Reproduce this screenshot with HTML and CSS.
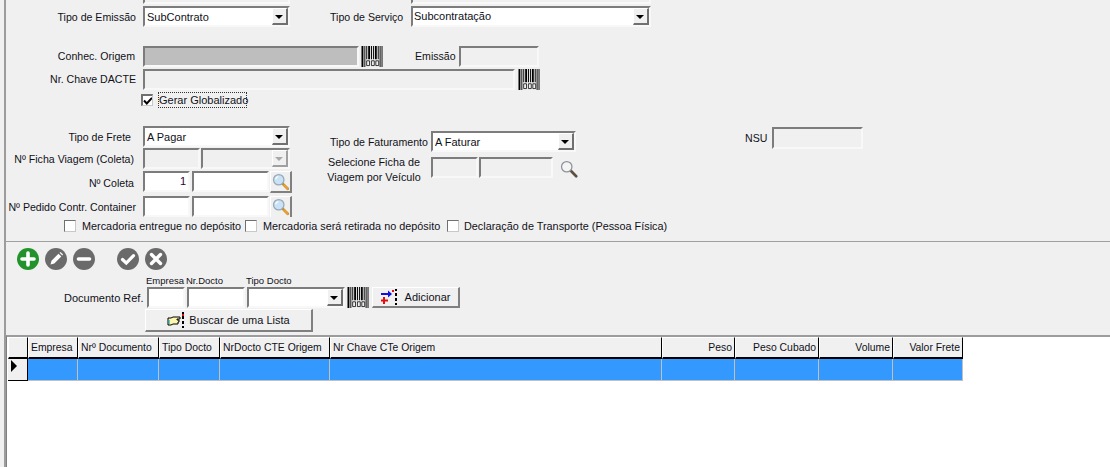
FILE: index.html
```html
<!DOCTYPE html>
<html lang="en">
<head>
    <meta charset="UTF-8">
    <title>Documento Ref</title>
    <link rel="stylesheet" href="styles.css">
</head>
<body>
    <svg class="defs" width="0" height="0">
        <symbol id="barcode" viewBox="0 0 22 22">
            <path fill="#000" d="M0 0h2v22H0zM3 0h1v22H3zM5 0h1v14H5zM7 0h2v14H7zM10 0h1v14h-1zM12 0h1v14h-1zM14 0h2v14h-2zM17 0h1v14h-1zM19 0h1v22h-1zM21 0h1v22h-1z"/>
            <path fill="none" stroke="#000" stroke-width=".8" d="M5.4 15.5h3v5h-3zM10.4 15.5h3v5h-3zM15 15.5h3v5h-3z"/>
        </symbol>
        <symbol id="lens" viewBox="0 0 20 20">
            <path d="M11.5 11.5l6 6" stroke="#b98a2e" stroke-width="3" stroke-linecap="round"/>
            <path d="M13.5 13.5l4 4" stroke="#f0a030" stroke-width="2" stroke-linecap="round"/>
            <circle cx="7.5" cy="7.5" r="5.8" fill="#c8e2f7" stroke="#9aa8b2" stroke-width="1.4"/>
            <path d="M4 7a3.6 3.6 0 0 1 3-3" fill="none" stroke="#fff" stroke-width="1.2"/>
        </symbol>
        <symbol id="lens-off" viewBox="0 0 20 20">
            <path d="M12 12l6 6" stroke="#5c5040" stroke-width="3" stroke-linecap="round"/>
            <circle cx="7.5" cy="7.5" r="5.8" fill="#f4f4f4" stroke="#8b9298" stroke-width="1.4"/>
        </symbol>
        <symbol id="tick" viewBox="0 0 12 12">
            <path d="M2 5.5l2.8 3L10 2.8" fill="none" stroke="#000" stroke-width="2"/>
        </symbol>
    </svg>

    <div class="window">
        <div class="stub-row">
            <div class="stub stub-a"></div>
            <div class="stub stub-b"></div>
        </div>

        <div class="row row-emissao">
            <label class="label label-w">Tipo de Emissão</label>
            <div class="select w-147"><span class="select-text">SubContrato</span><span class="arrow"></span></div>
            <label class="label label-servico">Tipo de Serviço</label>
            <div class="select w-240 select-up"><span class="select-text">Subcontratação</span><span class="arrow"></span></div>
        </div>

        <div class="row row-conhec">
            <label class="label label-w">Conhec. Origem</label>
            <div class="input input-grey w-216"></div>
            <svg class="barcode"><use href="#barcode"/></svg>
            <label class="label label-emissao">Emissão</label>
            <div class="input w-80"></div>
        </div>
        <div class="row row-chave">
            <label class="label label-w">Nr. Chave DACTE</label>
            <div class="input w-372"></div>
            <svg class="barcode"><use href="#barcode"/></svg>
        </div>
        <div class="row row-global">
            <span class="check check-on"><svg width="12" height="12"><use href="#tick"/></svg></span>
            <span class="focus-label">Gerar Globalizado</span>
        </div>

        <div class="form-cols">
            <div class="col-left">
                <div class="row row-frete">
                    <label class="label label-w">Tipo de Frete</label>
                    <div class="select w-147"><span class="select-text">A Pagar</span><span class="arrow"></span></div>
                </div>
                <div class="row row-ficha">
                    <label class="label label-w">Nº Ficha Viagem (Coleta)</label>
                    <div class="input w-57"></div>
                    <div class="select select-off w-89"><span class="arrow arrow-off"></span></div>
                </div>
                <div class="row row-coleta">
                    <label class="label label-w">Nº Coleta</label>
                    <div class="input input-white w-47 num">1</div>
                    <div class="input input-white w-77"></div>
                    <button class="lens-btn"><svg width="18" height="18"><use href="#lens"/></svg></button>
                </div>
                <div class="row row-pedido">
                    <label class="label label-w">Nº Pedido Contr. Container</label>
                    <div class="input input-white w-47"></div>
                    <div class="input input-white w-77"></div>
                    <button class="lens-btn lens-btn-cut"><svg width="18" height="18"><use href="#lens"/></svg></button>
                </div>
            </div>
            <div class="col-mid">
                <div class="row">
                    <label class="label label-fat">Tipo de Faturamento</label>
                    <div class="select w-145"><span class="select-text">A Faturar</span><span class="arrow"></span></div>
                </div>
                <div class="row row-selecione">
                    <label class="label label-sel">Selecione Ficha de<br>Viagem por Veículo</label>
                    <div class="input w-47"></div>
                    <div class="input w-74"></div>
                    <svg class="lens-plain" width="18" height="18"><use href="#lens-off"/></svg>
                </div>
            </div>
            <div class="col-nsu">
                <label class="label label-nsu">NSU</label>
                <div class="input w-91 tall"></div>
            </div>
        </div>

        <div class="row row-checks">
            <span class="check"></span><span class="check-label cl-1">Mercadoria entregue no depósito</span>
            <span class="check"></span><span class="check-label cl-2">Mercadoria será retirada no depósito</span>
            <span class="check"></span><span class="check-label cl-3">Declaração de Transporte (Pessoa Física)</span>
        </div>

        <div class="panel">
            <div class="toolbar">
                <span class="round round-green"><svg width="22" height="22" viewBox="0 0 22 22"><path d="M11 5v12M5 11h12" stroke="#fff" stroke-width="3.6" stroke-linecap="round"/></svg></span>
                <span class="round"><svg width="22" height="22" viewBox="0 0 22 22"><path d="M5.5 16.5l1-3.8 7-7 2.8 2.8-7 7zM14.5 4.8l1-.8 2.6 2.6-.8 1z" fill="#fff"/></svg></span>
                <span class="round"><svg width="22" height="22" viewBox="0 0 22 22"><path d="M5.5 11h11" stroke="#fff" stroke-width="3.6" stroke-linecap="round"/></svg></span>
                <span class="round round-gap"><svg width="22" height="22" viewBox="0 0 22 22"><path d="M5.5 11.5l3.8 3.6 7.2-7.4" fill="none" stroke="#fff" stroke-width="3.2" stroke-linecap="round"/></svg></span>
                <span class="round"><svg width="22" height="22" viewBox="0 0 22 22"><path d="M6.5 6.5l9 9M15.5 6.5l-9 9" stroke="#fff" stroke-width="3.4" stroke-linecap="round"/></svg></span>
            </div>

            <div class="doc-row">
                <label class="label label-doc">Documento Ref.</label>
                <div class="doc-field">
                    <span class="mini">Empresa</span>
                    <div class="input input-white w-38"></div>
                </div>
                <div class="doc-field">
                    <span class="mini">Nr.Docto</span>
                    <div class="input input-white w-58"></div>
                </div>
                <div class="doc-field">
                    <span class="mini">Tipo Docto</span>
                    <div class="select w-98 select-doc"><span class="arrow"></span></div>
                </div>
                <svg class="barcode barcode-doc"><use href="#barcode"/></svg>
                <button class="btn btn-add">
                    <svg width="20" height="16" viewBox="0 0 20 16">
                        <path d="M0 5h9" stroke="#1010e0" stroke-width="2"/>
                        <path d="M7 1.5l4 3.5-4 3.5z" fill="#1010e0"/>
                        <path d="M3 8v7M0 11.5h7" stroke="#e01010" stroke-width="2"/>
                        <path d="M14 0h2v2h-2zM14 4h2v3h-2zM14 9h2v3h-2zM14 14h2v2h-2z" fill="#000"/>
                        <path d="M11 1h2v2h-2z" fill="#e01010"/>
                    </svg>
                    Adicionar
                </button>
            </div>
            <button class="btn btn-lista">
                <svg width="18" height="16" viewBox="0 0 18 16">
                    <path d="M1 6h3l2-1h7v2h-3v1h2v2h-1v2H6l-2 1H1z" fill="#fbf7b0" stroke="#000"/>
                    <path d="M2 8h1v4H2z" fill="#38d8e0"/>
                    <path d="M15 0h2v2h-2zM15 4h2v3h-2zM15 9h2v3h-2zM15 14h2v2h-2z" fill="#000"/>
                    <path d="M15 2h2v2h-2z" fill="#e01010"/>
                </svg>
                Buscar de uma Lista
            </button>
        </div>

        <div class="grid-area">
            <div class="grid">
                <div class="head corner"></div>
                <div class="head">Empresa</div>
                <div class="head">Nrº Documento</div>
                <div class="head">Tipo Docto</div>
                <div class="head">NrDocto CTE Origem</div>
                <div class="head">Nr Chave CTe Origem</div>
                <div class="head right">Peso</div>
                <div class="head right">Peso Cubado</div>
                <div class="head right">Volume</div>
                <div class="head right">Valor Frete</div>

                <div class="marker"><span class="tri"></span></div>
                <div class="cell"></div>
                <div class="cell"></div>
                <div class="cell"></div>
                <div class="cell"></div>
                <div class="cell"></div>
                <div class="cell"></div>
                <div class="cell"></div>
                <div class="cell"></div>
                <div class="cell"></div>
            </div>
        </div>
    </div>
</body>
</html>
```

FILE: styles.css
```css
*{
    box-sizing: border-box;
    margin: 0;
    padding: 0;
}
html,body{
    height: 100%;
    overflow: hidden;
}
body{
    font-family: "Liberation Sans", Arial, sans-serif;
    font-size: 11px;
    color: #101018;
    background-color: #f0f0f0;
}
.defs{
    display: block;
    height: 0;
}
.window{
    height: 467px;
    margin-left: 4px;
    border-left: 2px solid #9c9c9c;
    display: flex;
    flex-direction: column;
    overflow: hidden;
}
.row{
    display: flex;
    align-items: center;
}

/* labels */
.label{
    font-size: 10.6px;
    white-space: nowrap;
}
.label-w{
    width: 131px;
    margin-right: 6px;
    padding-right: 1px;
    text-align: right;
}
.row-conhec .label-w{
    padding-right: 2px;
    margin-top: -1px;
}
.row-chave .label-w{
    margin-top: -2px;
}
.row-frete .label-w{
    padding-right: 6px;
}
.row-ficha .label-w{
    padding-right: 3px;
}
.row-coleta .label-w{
    padding-right: 3px;
    margin-top: 2px;
}

/* fields */
.input{
    height: 21px;
    border: 2px solid #f8f8f8;
    border-top-color: #7c7c7c;
    border-left-color: #7c7c7c;
    background-color: #f0f0f0;
    flex: none;
}
.input-grey{
    background-color: #bebebe;
}
.input-white{
    background-color: #fff;
}
.num{
    text-align: right;
    padding-right: 2px;
    color: #300030;
    line-height: 17px;
}
.select{
    height: 21px;
    border: 2px solid #f8f8f8;
    border-top-color: #7c7c7c;
    border-left-color: #7c7c7c;
    background-color: #fff;
    display: flex;
    align-items: center;
    justify-content: space-between;
    flex: none;
}
.select-text{
    padding-left: 2px;
}
.select-up .select-text{
    padding-left: 1px;
    margin-top: -2px;
}
.select-off{
    background-color: #f0f0f0;
    justify-content: flex-end;
    margin-left: 1px;
}
.arrow{
    width: 16px;
    height: 17px;
    background-color: #f0f0f0;
    border: 2px solid #707070;
    border-top: 1px solid #fff;
    border-left: 1px solid #fff;
    position: relative;
}
.arrow::after{
    content: "";
    position: absolute;
    left: 2px;
    top: 6px;
    border-left: 4px solid transparent;
    border-right: 4px solid transparent;
    border-top: 4px solid #000;
}
.arrow-off{
    border-right-color: #a0a0a0;
    border-bottom-color: #a0a0a0;
}
.arrow-off::after{
    border-top-color: #a8a8a8;
}
.w-38{ width: 38px; }
.w-47{ width: 47px; }
.w-57{ width: 57px; }
.w-58{ width: 58px; }
.w-74{ width: 74px; }
.w-77{ width: 77px; }
.w-80{ width: 80px; }
.w-89{ width: 89px; }
.w-91{ width: 91px; }
.w-98{ width: 98px; }
.w-145{ width: 145px; }
.w-147{ width: 147px; }
.w-216{ width: 216px; }
.w-240{ width: 240px; }
.w-372{ width: 372px; }

/* top area */
.stub-row{
    display: flex;
    height: 4px;
    padding-left: 137px;
    flex: none;
}
.stub{
    height: 4px;
    border: 2px solid #f8f8f8;
    border-top: 0;
    border-left-color: #7c7c7c;
}
.stub-a{
    width: 147px;
}
.stub-b{
    width: 240px;
    margin-left: 121px;
}
.row-emissao{
    margin-top: 2px;
    height: 21px;
}
.label-servico{
    margin-left: 40px;
    width: 81px;
}
.row-conhec{
    margin-top: 19px;
    height: 21px;
}
.label-emissao{
    margin-left: 32px;
    width: 44px;
    margin-top: -1px;
}
.barcode{
    width: 22px;
    height: 21px;
    margin-left: 2px;
    flex: none;
}
.row-chave{
    margin-top: 2px;
    height: 21px;
}
.row-chave .barcode{
    margin-left: 3px;
}
.row-global{
    margin-top: 3px;
    height: 13px;
    padding-left: 135px;
}

/* checks */
.check{
    width: 12px;
    height: 12px;
    flex: none;
    background-color: #fff;
    border: 1px solid #707070;
    border-right-color: #c8c8c8;
    border-bottom-color: #c8c8c8;
    display: block;
    overflow: hidden;
}
.check-on{
    border-top-width: 2px;
    border-left-width: 2px;
    margin-top: 1px;
}
.check-on svg{
    display: block;
    margin: -1px 0 0 -1px;
}
.focus-label{
    width: 89px;
    margin-left: 5px;
    line-height: 14px;
    border: 1px dotted #333;
    white-space: nowrap;
    text-align: center;
}

/* middle form */
.form-cols{
    display: flex;
    margin-top: 20px;
    flex: none;
}
.col-left{
    width: 286px;
    flex: none;
}
.row-frete{
    height: 21px;
}
.row-ficha{
    margin-top: 1px;
    height: 21px;
}
.row-coleta{
    margin-top: 2px;
    height: 21px;
    align-items: flex-start;
}
.row-pedido{
    margin-top: 4px;
    height: 21px;
    align-items: flex-start;
}
.row-coleta .label-w{
    line-height: 20px;
}
.row-pedido .label-w{
    line-height: 22px;
}
.row-coleta .input + .input,
.row-pedido .input + .input{
    margin-left: 2px;
}
.lens-btn{
    width: 22px;
    height: 22px;
    margin-left: 1px;
    background-color: #f0f0f0;
    border: 2px solid #808080;
    border-top: 1px solid #fff;
    border-left: 1px solid #fff;
    display: flex;
    align-items: center;
    justify-content: center;
    flex: none;
}
.lens-btn-cut{
    height: 21px;
    border-bottom: 0;
}
.col-mid{
    width: 435px;
    padding-top: 5px;
    flex: none;
}
.label-fat{
    width: 101px;
    margin-left: 38px;
    text-align: left;
}
.row-selecione{
    margin-top: 5px;
    height: 21px;
    align-items: flex-start;
}
.label-sel{
    width: 112px;
    margin: -2px 1px 0 26px;
    text-align: center;
    line-height: 15px;
    font-size: 10.8px;
}
.row-selecione .input + .input{
    margin-left: 1px;
}
.lens-plain{
    margin: 3px 0 0 7px;
    flex: none;
}
.col-nsu{
    display: flex;
    align-items: center;
    height: 22px;
    padding-left: 22px;
    gap: 7px;
    margin-left: -4px;
    margin-top: 1px;
}
.label-nsu{
    width: 20px;
}
.tall{
    height: 22px;
}
.row-checks{
    margin-top: 3px;
    height: 12px;
    padding-left: 58px;
}
.check-label{
    font-size: 10.85px;
    margin: -1px 0 0 6px;
    white-space: nowrap;
}
.cl-1{
    width: 159px;
    margin-right: 4px;
}
.cl-2{
    width: 178px;
    margin-right: 6px;
}
.cl-3{
    margin-left: 5px;
}

/* lower panel */
.panel{
    margin-top: 9px;
    height: 94px;
    border-top: 1px solid #a0a0a0;
    flex: none;
    padding-left: 11px;
}
.toolbar{
    display: flex;
    gap: 6px;
    margin-top: 6px;
    height: 22px;
}
.round{
    width: 22px;
    height: 22px;
    border-radius: 50%;
    background-color: #6a6a6a;
    display: block;
}
.round svg{
    display: block;
}
.round-green{
    background-color: #22932c;
}
.round-gap{
    margin-left: 16px;
}
.doc-row{
    display: flex;
    align-items: flex-end;
    margin-top: 6px;
    height: 32px;
}
.label-doc{
    width: 130px;
    padding-left: 47px;
    margin-bottom: 4px;
    font-size: 11px;
}
.doc-field{
    display: flex;
    flex-direction: column;
    margin-right: 2px;
    flex: none;
}
.mini{
    font-size: 9.5px;
    line-height: 11px;
    white-space: nowrap;
    margin: -1px 0 1px -1px;
}
.select-doc{
    justify-content: flex-end;
}
.barcode-doc{
    margin-left: 0;
}
.btn{
    font-family: inherit;
    font-size: 11px;
    color: #101018;
    background-color: #f0f0f0;
    border: 2px solid #808080;
    border-top: 1px solid #fff;
    border-left: 1px solid #fff;
    display: flex;
    align-items: center;
    justify-content: center;
    gap: 4px;
}
.btn-add{
    width: 88px;
    height: 21px;
    margin-left: 3px;
}
.btn-lista{
    width: 168px;
    height: 23px;
    margin: 1px 0 0 128px;
}

/* table */
.grid-area{
    flex: 1;
    background-color: #fff;
    border-top: 2px solid #9c9c9c;
    border-left: 1px solid #808080;
    padding-left: 1px;
}
.grid{
    display: grid;
    grid-template-columns: 20px 50px 81px 61px 110px 332px 73px 84px 74px 70px;
    grid-template-rows: 22px 22px;
    width: 955px;
}
.head{
    font-size: 10.4px;
    background-color: #f0f0f0;
    border-top: 1px solid #fff;
    border-left: 1px solid #fff;
    border-right: 1px solid #000;
    border-bottom: 2px solid #000;
    padding: 0 2px;
    line-height: 19px;
    white-space: nowrap;
    overflow: hidden;
}
.right{
    text-align: right;
}
.marker{
    background-color: #f0f0f0;
    border-right: 1px solid #000;
    border-bottom: 1px solid #000;
    padding: 1px 0 0 3px;
}
.tri{
    display: block;
    width: 0;
    border-top: 6px solid transparent;
    border-bottom: 6px solid transparent;
    border-left: 6px solid #000;
}
.cell{
    background-color: #3399ff;
    border-right: 1px solid #c0c0c0;
    border-bottom: 1px solid #c0c0c0;
}
```
